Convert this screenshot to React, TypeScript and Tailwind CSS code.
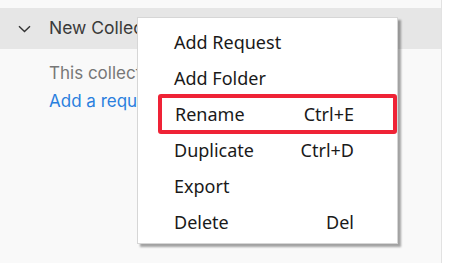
import React from "react";

const items: { label: string; shortcut?: string; highlight?: boolean }[] = [
  { label: "Add Request" },
  { label: "Add Folder" },
  { label: "Rename", shortcut: "Ctrl+E", highlight: true },
  { label: "Duplicate", shortcut: "Ctrl+D" },
  { label: "Export" },
  { label: "Delete", shortcut: "Del" },
];

export default function App() {
  return (
    <div className="w-[454px] h-[263px] flex bg-white overflow-hidden relative">
      <div
        className="w-[442px] h-full bg-[#f9f9f9] border-r border-[#e2e2e2] pt-[8px]"
        style={{ fontFamily: 'Inter, "Liberation Sans", sans-serif' }}
      >
        <div className="h-[41px] bg-[#e6e6e6] flex items-center">
          <svg className="ml-[18px]" width="13" height="8" viewBox="0 0 13 8" fill="none">
            <path d="M1 1.2 L6.5 6.5 L12 1.2" stroke="#333" strokeWidth="1.4" />
          </svg>
          <span className="ml-[18px] text-[17.5px] text-[#3a3a3a]">New Collection</span>
        </div>
        <div className="pl-[49px] pt-[10px] text-[17px] leading-[28px]">
          <div className="text-[#777]">This collection is empty</div>
          <div className="text-[#2a7fde]">Add a request</div>
        </div>
      </div>

      <div
        className="absolute left-[137px] top-[17px] w-[261px] h-[227px] bg-white border border-[#d6d6d6] shadow-[3px_3px_2px_rgba(0,0,0,0.35)] pt-[6px]"
        style={{ fontFamily: '"Noto Sans", "Liberation Sans", sans-serif' }}
      >
        {items.map((it) => (
          <div
            key={it.label}
            className={
              "flex items-center text-[18px] text-[#1a1a1a] " +
              (it.highlight
                ? "ml-[20px] border-[4px] border-[#ef2336] rounded-[3px] pl-[13px] pr-[39px] h-[40px] -my-[2px]"
                : "h-[36px] pl-[36px] pr-[43px]")
            }
          >
            <span className="flex-1">{it.label}</span>
            {it.shortcut && <span>{it.shortcut}</span>}
          </div>
        ))}
      </div>
    </div>
  );
}
